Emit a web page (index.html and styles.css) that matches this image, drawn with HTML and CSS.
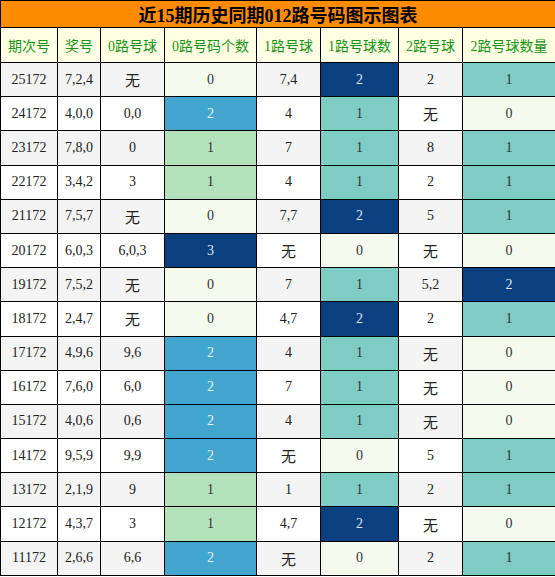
FILE: index.html
```html
<!DOCTYPE html>
<html lang="zh">
<head>
    <meta charset="UTF-8">
    <title>近15期历史同期012路号码图示图表</title>
    <link rel="stylesheet" href="styles.css">
</head>
<body>
    <table class="chart">
        <colgroup>
            <col style="width:57px"><col style="width:43px"><col style="width:64px"><col style="width:92px">
            <col style="width:64px"><col style="width:78px"><col style="width:64px"><col style="width:93px">
        </colgroup>
        <thead>
            <tr><th class="title" colspan="8">近15期历史同期012路号码图示图表</th></tr>
            <tr class="head">
                <th>期次号</th><th>奖号</th><th>0路号球</th><th>0路号码个数</th>
                <th>1路号球</th><th>1路号球数</th><th>2路号球</th><th>2路号球数量</th>
            </tr>
        </thead>
        <tbody id="rows"></tbody>
    </table>

    <script>
        const data = [
            ['25172', '7,2,4', '无', 0, '7,4', 2, '2', 1],
            ['24172', '4,0,0', '0,0', 2, '4', 1, '无', 0],
            ['23172', '7,8,0', '0', 1, '7', 1, '8', 1],
            ['22172', '3,4,2', '3', 1, '4', 1, '2', 1],
            ['21172', '7,5,7', '无', 0, '7,7', 2, '5', 1],
            ['20172', '6,0,3', '6,0,3', 3, '无', 0, '无', 0],
            ['19172', '7,5,2', '无', 0, '7', 1, '5,2', 2],
            ['18172', '2,4,7', '无', 0, '4,7', 2, '2', 1],
            ['17172', '4,9,6', '9,6', 2, '4', 1, '无', 0],
            ['16172', '7,6,0', '6,0', 2, '7', 1, '无', 0],
            ['15172', '4,0,6', '0,6', 2, '4', 1, '无', 0],
            ['14172', '9,5,9', '9,9', 2, '无', 0, '5', 1],
            ['13172', '2,1,9', '9', 1, '1', 1, '2', 1],
            ['12172', '4,3,7', '3', 1, '4,7', 2, '无', 0],
            ['11172', '2,6,6', '6,6', 2, '无', 0, '2', 1]
        ];

        // 0路 column uses its own palette
        const zeroColors = ['n0', 'g1', 'm2', 'd3'];
        const otherColors = ['n0', 't1', 'd3', 'd3'];

        function cell(text) {
            return `<td class="${text === '无' ? 'none' : ''}">${text}</td>`;
        }

        const tbody = document.getElementById('rows');
        data.forEach((r, i) => {
            const tr = document.createElement('tr');
            tr.className = i % 2 === 0 ? 'grey' : '';
            tr.innerHTML =
                cell(r[0]) + cell(r[1]) + cell(r[2]) +
                `<td class="${zeroColors[r[3]]}">${r[3]}</td>` +
                cell(r[4]) +
                `<td class="${otherColors[r[5]]}">${r[5]}</td>` +
                cell(r[6]) +
                `<td class="${otherColors[r[7]]}">${r[7]}</td>`;
            tbody.appendChild(tr);
        });
    </script>
</body>
</html>
```

FILE: styles.css
```css
body {
    margin: 0;
    padding: 0;
    background-color: #fff;
    font-family: "Liberation Serif", "Noto Sans CJK SC", serif;
}

.chart {
    width: 555px;
    border-collapse: collapse;
    table-layout: fixed;
}

.chart th, .chart td {
    border: 1px solid #000;
    padding: 0;
    text-align: center;
    font-weight: normal;
}

.title {
    height: 26px;
    background-color: #ff8c00;
    color: #000;
    font-size: 18px;
    font-weight: bold !important;
    font-family: "Liberation Serif", "Noto Sans CJK SC", serif;
}

.head th {
    height: 34px;
    background-color: #ffffe3;
    color: #189418;
    font-size: 14px;
}

.chart td {
    height: 33.2px;
    font-size: 14px;
    color: #222;
}

tbody tr {
    background-color: #fff;
}

tbody tr.grey {
    background-color: #f4f4f4;
}

td.none {
    font-family: "Noto Sans CJK SC", sans-serif;
    font-size: 15px;
    line-height: 1;
}

td.n0 {
    background-color: #f4faee;
    color: #333;
}

td.g1 {
    background-color: #b3e2ba;
    color: #333;
}

td.t1 {
    background-color: #7eccc4;
    color: #333;
}

td.m2 {
    background-color: #42a5cd;
    color: #e8f4fa;
}

td.d3 {
    background-color: #0b4080;
    color: #dde6f2;
}
```
